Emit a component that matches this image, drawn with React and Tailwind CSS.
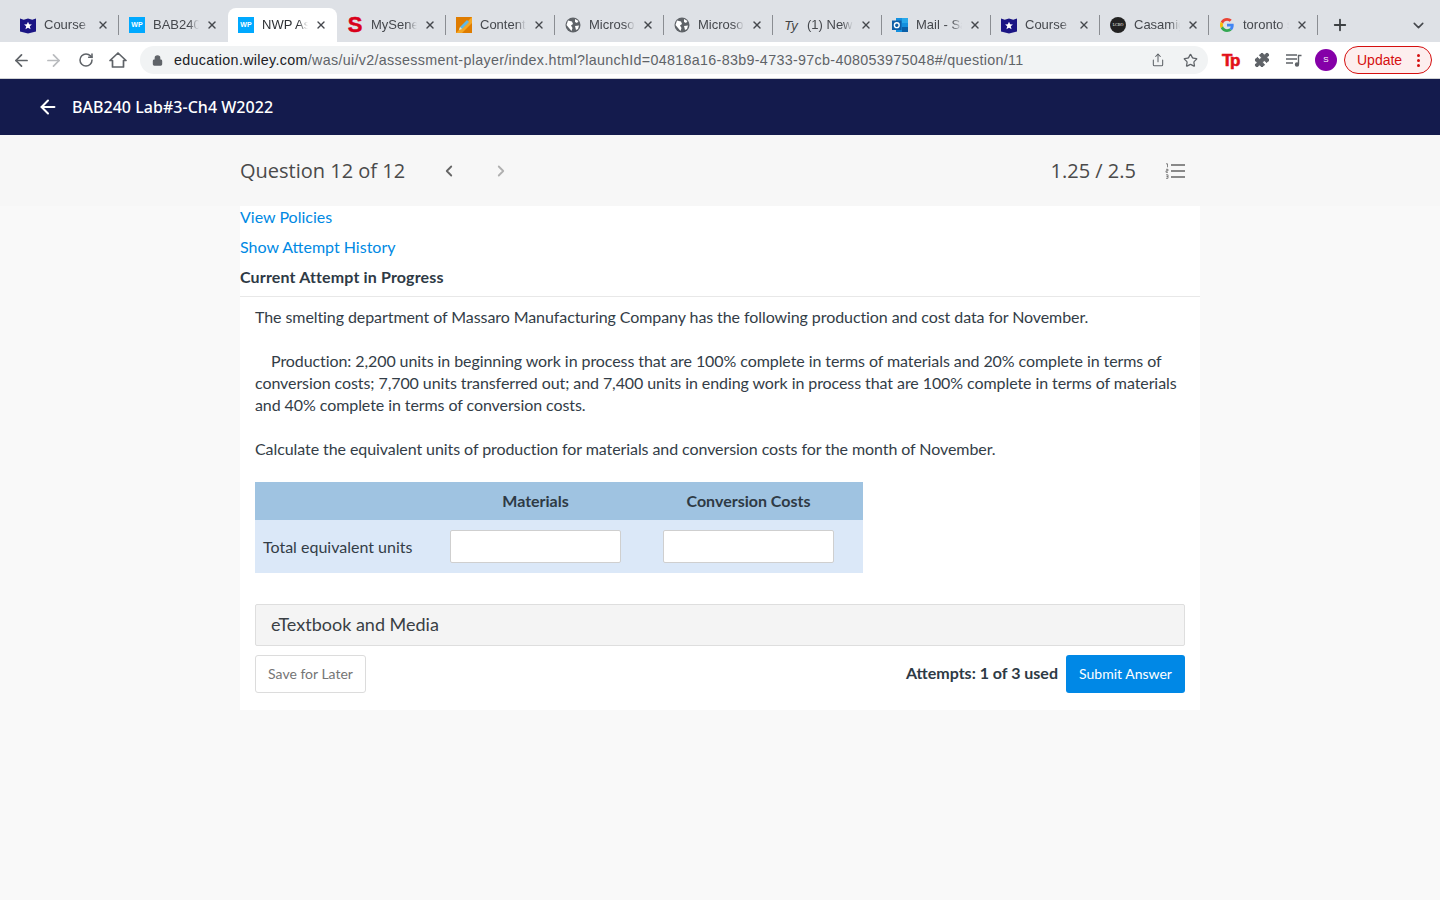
import React from 'react'
import { ArrowLeft, ArrowRight, RotateCw, Lock, X, Plus, ChevronDown, ChevronLeft, ChevronRight, Share, Star, Puzzle } from 'lucide-react'

const Shield = () => (
  <svg width="17" height="17" viewBox="0 0 17 17">
    <path d="M0 1 L4 2.5 L8.5 1 L13 2.5 L17 1 V15 L8.5 17 L0 15 Z" fill="#1b1584" />
    <path d="M8.5 4.5 l1.2 2.8 3 .2 -2.3 1.9 .8 3 -2.7 -1.6 -2.7 1.6 .8 -3 -2.3 -1.9 3 -.2 z" fill="#fff" />
  </svg>
)

const Wp = () => (
  <div className="w-4 h-4 bg-[#00a9ff] text-white text-[7px] font-bold flex items-center justify-center font-['Liberation_Sans',sans-serif]">WP</div>
)

const BigS = () => <div className="w-4 h-4 flex items-center justify-center text-[#d9001b] text-[22px] font-black [-webkit-text-stroke:0.5px_#d9001b] font-['Liberation_Sans',sans-serif] leading-none">S</div>

const Pencil = () => (
  <svg width="16" height="16" viewBox="0 0 16 16">
    <rect width="16" height="16" fill="#df7c00" />
    <path d="M0 16 L16 0 V6 L6 16 Z" fill="#f5a623" />
    <path d="M3 13 L4 10 L11 3 L13 5 L6 12 Z" fill="#5fb8e6" />
    <path d="M3 13 L4 10 L6 12 Z" fill="#fde9b0" />
  </svg>
)

const Globe = () => (
  <svg width="16" height="16" viewBox="0 0 16 16">
    <circle cx="8" cy="8" r="7.5" fill="#5f6368" />
    <path d="M3 3.5 L7 4.5 L8 7 L6 8.5 L7.5 11 L6.5 14 L4 11 L1.5 8 Z M10 2 L13.5 4 L12 6 L10 5 Z M10 9 L14 8.5 L13 12 L11 13 Z" fill="#fff" />
  </svg>
)

const Ty = () => <div className="w-4 h-4 flex items-center justify-center text-[#444] text-[13px] italic font-['Liberation_Sans',sans-serif] leading-none">Ty</div>

const Outlook = () => (
  <svg width="16" height="16" viewBox="0 0 16 16">
    <rect x="4" y="1" width="12" height="14" fill="#1490df" />
    <rect x="10" y="1" width="6" height="5" fill="#28a8ea" />
    <rect x="10" y="10" width="6" height="5" fill="#0a5fa8" />
    <rect x="0" y="3.5" width="9.5" height="9.5" fill="#0f5ea8" />
    <circle cx="4.8" cy="8.2" r="2.4" fill="none" stroke="#fff" strokeWidth="1.4" />
  </svg>
)

const Lcbo = () => (
  <div className="w-4 h-4 rounded-full bg-[#222] text-white text-[4px] flex items-center justify-center font-['Liberation_Serif',serif]">LCBO</div>
)

const GoogleG = () => (
  <svg width="14" height="14" viewBox="0 0 48 48">
    <path fill="#EA4335" d="M24 9.5c3.5 0 6.7 1.2 9.2 3.6l6.9-6.9C35.9 2.4 30.4 0 24 0 14.6 0 6.5 5.4 2.6 13.2l8 6.2C12.5 13.6 17.8 9.5 24 9.5z" />
    <path fill="#4285F4" d="M47 24.5c0-1.6-.1-3.1-.4-4.5H24v9h12.9c-.6 3-2.2 5.5-4.8 7.2l7.7 6c4.5-4.2 7.2-10.3 7.2-17.7z" />
    <path fill="#FBBC05" d="M10.600 28.600c-.5-1.400-.8-3-.8-4.600s.3-3.200.8-4.600l-8-6.200C.9 16.500 0 20.100 0 24s.9 7.500 2.600 10.800l8-6.200z" />
    <path fill="#34A853" d="M24 48c6.500 0 11.900-2.100 15.800-5.800l-7.700-6c-2.100 1.400-4.900 2.300-8.100 2.300-6.200 0-11.500-4.100-13.400-9.900l-8 6.200C6.500 42.600 14.600 48 24 48z" />
  </svg>
)

const tabs = [
  { title: 'Course Ho', icon: <Shield /> },
  { title: 'BAB240 Lab', icon: <Wp /> },
  { title: 'NWP Assess', icon: <Wp />, active: true },
  { title: 'MySeneca', icon: <BigS /> },
  { title: 'Content', icon: <Pencil /> },
  { title: 'Microsoft', icon: <Globe /> },
  { title: 'Microsoft', icon: <Globe /> },
  { title: '(1) New', icon: <Ty /> },
  { title: 'Mail - Sar', icon: <Outlook /> },
  { title: 'Course Ho', icon: <Shield /> },
  { title: 'Casamigos', icon: <Lcbo /> },
  { title: 'toronto star', icon: <GoogleG /> },
]

const Tab = ({ tab, hideSep }) => (
  <div className={`w-[109px] h-[34px] shrink-0 flex items-center pl-[10.500px] relative ${tab.active ? 'bg-white rounded-t-lg' : ''}`}>
    <div className="w-4 h-4 shrink-0 flex items-center justify-center">{tab.icon}</div>
    <div className={`ml-[8px] w-[46px] overflow-hidden whitespace-nowrap text-[13px] leading-4 [mask-image:linear-gradient(to_right,#000_78%,transparent_100%)] ${tab.active ? 'text-[#2d3034]' : 'text-[#45484d]'}`}>
      {tab.title}
    </div>
    <X size={12} strokeWidth={2.8} className="ml-[7px] shrink-0 text-[#45484d]" />
    {!hideSep && <div className="absolute right-0 top-[7px] w-px h-[20px] bg-[#8a8d92]" />}
  </div>
)

const TabBar = () => (
  <div className="h-[42px] bg-[#dee1e6] flex items-end pl-[9.500px]">
    {tabs.map((tab, i) => (
      <Tab key={i} tab={tab} hideSep={tab.active || i === 1} />
    ))}
    <div className="h-[34px] flex items-center">
      <Plus size={18} strokeWidth={2.4} className="ml-[13px] text-[#3c4043]" />
      <ChevronDown size={17} strokeWidth={2.2} className="ml-[61px] text-[#45484d]" />
    </div>
  </div>
)

const ToolBar = () => (
  <div className="h-[37px] bg-white border-b border-[#d0d2d5] flex items-center text-[#5f6368]">
    <ArrowLeft size={19} strokeWidth={2.2} className="ml-[12px]" />
    <ArrowRight size={19} strokeWidth={2.2} className="ml-[13px] text-[#b9bbbe]" />
    <RotateCw size={16} strokeWidth={2.3} className="ml-[15px]" />
    <svg width="18" height="18" viewBox="0 0 18 18" fill="none" stroke="#5f6368" strokeWidth="1.700" strokeLinejoin="round" className="ml-[15px]">
      <path d="M9 2 L17 9.500 H14.500 V16 H3.500 V9.500 H1 Z" />
    </svg>
    <div className="ml-[13px] w-[1068px] h-[28px] rounded-full bg-[#f1f3f4] flex items-center">
      <Lock size={11} fill="#5f6368" strokeWidth={2.5} className="ml-[12px]" />
      <div className="ml-[11px] pt-[1px] text-[14.300px] tracking-[0.320px] whitespace-nowrap text-[#5f6368]">
        <span className="text-[#202124]">education.wiley.com</span>/was/ui/v2/assessment-player/index.html?launchId=04818a16-83b9-4733-97cb-408053975048#/question/11
      </div>
      <Share size={14} strokeWidth={1.8} className="ml-auto" />
      <Star size={15} strokeWidth={2} className="ml-[18px] mr-[10px]" />
    </div>
    <div className="ml-[14px] w-4 text-[#e2111a] text-[17px] font-black leading-none tracking-[-2.500px] [-webkit-text-stroke:0.6px_#e2111a] font-['Liberation_Sans',sans-serif]">Tp</div>
    <Puzzle size={16} fill="#5f6368" strokeWidth={1.5} className="ml-[16px]" />
    <svg width="16" height="14" viewBox="0 0 16 14" className="ml-[16px]" fill="none" stroke="#5f6368" strokeWidth="1.400">
      <path d="M0 2h11M0 6h11M0 10h7" />
      <path d="M12.500 11V2.500h3" />
      <circle cx="11" cy="11.500" r="1.500" fill="#5f6368" />
    </svg>
    <div className="ml-[13px] w-[22px] h-[22px] rounded-full bg-[#8500a8] text-white text-[8px] flex items-center justify-center">S</div>
    <div className="ml-[7px] w-[88px] h-[28px] rounded-full border border-[#d50f0f] bg-[#fdeeee] text-[#d50f0f] text-[14px] flex items-center pl-[12px]">
      Update
      <div className="ml-[15px] flex flex-col gap-[2px]">
        <span className="w-[3px] h-[3px] rounded-full bg-[#d50f0f]" />
        <span className="w-[3px] h-[3px] rounded-full bg-[#d50f0f]" />
        <span className="w-[3px] h-[3px] rounded-full bg-[#d50f0f]" />
      </div>
    </div>
  </div>
)

const NumList = () => (
  <svg width="20" height="16" viewBox="0 0 20 16" fill="none">
    <path d="M6 2h14M6 8h14M6 14h14" stroke="#666" strokeWidth="1.700" />
    <path d="M1 .8h1.500v3.500M1 6.300h2v1.500h-2v1.500h2M1 11.800h2v3.500h-2M1.500 13.500h1.500" stroke="#666" strokeWidth=".8" />
  </svg>
)

export default function App() {
  return (
    <div className="min-h-[900px] bg-[#f9f9f9] font-['Liberation_Sans',Roboto,sans-serif]">
      <TabBar />
      <ToolBar />

      <div className="h-[56px] bg-[#141b4d] flex items-center text-white">
        <ArrowLeft size={22} strokeWidth={2.2} className="ml-[37px]" />
        <div className="ml-[13px] text-[16px] tracking-[0.03px] font-['Noto_Sans',sans-serif] font-medium">BAB240 Lab#3-Ch4 W2022</div>
      </div>

      <div className="h-[71px] bg-[#f7f7f7]">
        <div className="h-full w-[960px] mx-auto flex items-center text-[#4a4a4a] font-['Open_Sans',sans-serif]">
          <div className="text-[20px]">Question 12 of 12</div>
          <ChevronLeft size={18} strokeWidth={2.4} className="ml-[35px] text-[#666]" />
          <ChevronRight size={18} strokeWidth={2.4} className="ml-[34px] text-[#b0b0b0]" />
          <div className="ml-auto text-[20px]">1.25 / 2.5</div>
          <div className="ml-[29px] mr-[15px]"><NumList /></div>
        </div>
      </div>

      <div className="w-[960px] h-[504px] mx-auto bg-white font-['Lato',sans-serif] text-[16px] text-[#2e3a45]">
        <div className="h-[91px] border-b border-[#e8e8e8]">
          <div className="text-[#0089e3] h-[24px] leading-[22px]">View Policies</div>
          <div className="text-[#0089e3] mt-[6px] h-[24px] leading-[22px]">Show Attempt History</div>
          <div className="font-bold mt-[6px] h-[24px] leading-[22px] tracking-[0.15px]">Current Attempt in Progress</div>
        </div>

        <div className="px-[15px] pt-[9px] leading-[22px] text-[#333d47]">
          <div className="tracking-[-0.08px]">
            <p>The smelting department of Massaro Manufacturing Company has the following production and cost data for November.</p>
            <p className="mt-[22px] indent-[16px]">Production: 2,200 units in beginning work in process that are 100% complete in terms of materials and 20% complete in terms of conversion costs; 7,700 units transferred out; and 7,400 units in ending work in process that are 100% complete in terms of materials and 40% complete in terms of conversion costs.</p>
            <p className="mt-[22px]">Calculate the equivalent units of production for materials and conversion costs for the month of November.</p>
          </div>

          <div className="mt-[22px] w-[608px]">
            <div className="h-[38px] bg-[#9fc3e1] flex items-center font-bold text-[#2e3a45]">
              <div className="w-[195px]" />
              <div className="w-[171px] text-center">Materials</div>
              <div className="w-[42px]" />
              <div className="w-[171px] text-center">Conversion Costs</div>
            </div>
            <div className="h-[53px] bg-[#dbe8f8] flex items-center">
              <div className="w-[195px] pl-[8px]">Total equivalent units</div>
              <input className="w-[171px] h-[33px] bg-white border border-[#cfcfcf] rounded-[2px]" />
              <div className="w-[42px]" />
              <input className="w-[171px] h-[33px] bg-white border border-[#cfcfcf] rounded-[2px]" />
            </div>
          </div>

          <div className="mt-[31px] h-[42px] bg-[#f4f4f4] border border-[#dedede] rounded-[2px] flex items-center pl-[15px] pb-[2px] text-[18px] text-[#3a3f44]">
            eTextbook and Media
          </div>

          <div className="mt-[9px] h-[38px] flex items-center">
            <button className="w-[111px] h-[38px] bg-white border border-[#dcdcdc] rounded-[3px] text-[14px] text-[#757575]">Save for Later</button>
            <div className="ml-auto font-bold text-[#2e3a45] -mt-[3px]">Attempts: 1 of 3 used</div>
            <button className="ml-[8px] w-[119px] h-[38px] bg-[#0088e6] rounded-[3px] text-[14px] text-white">Submit Answer</button>
          </div>
        </div>
      </div>
    </div>
  )
}
